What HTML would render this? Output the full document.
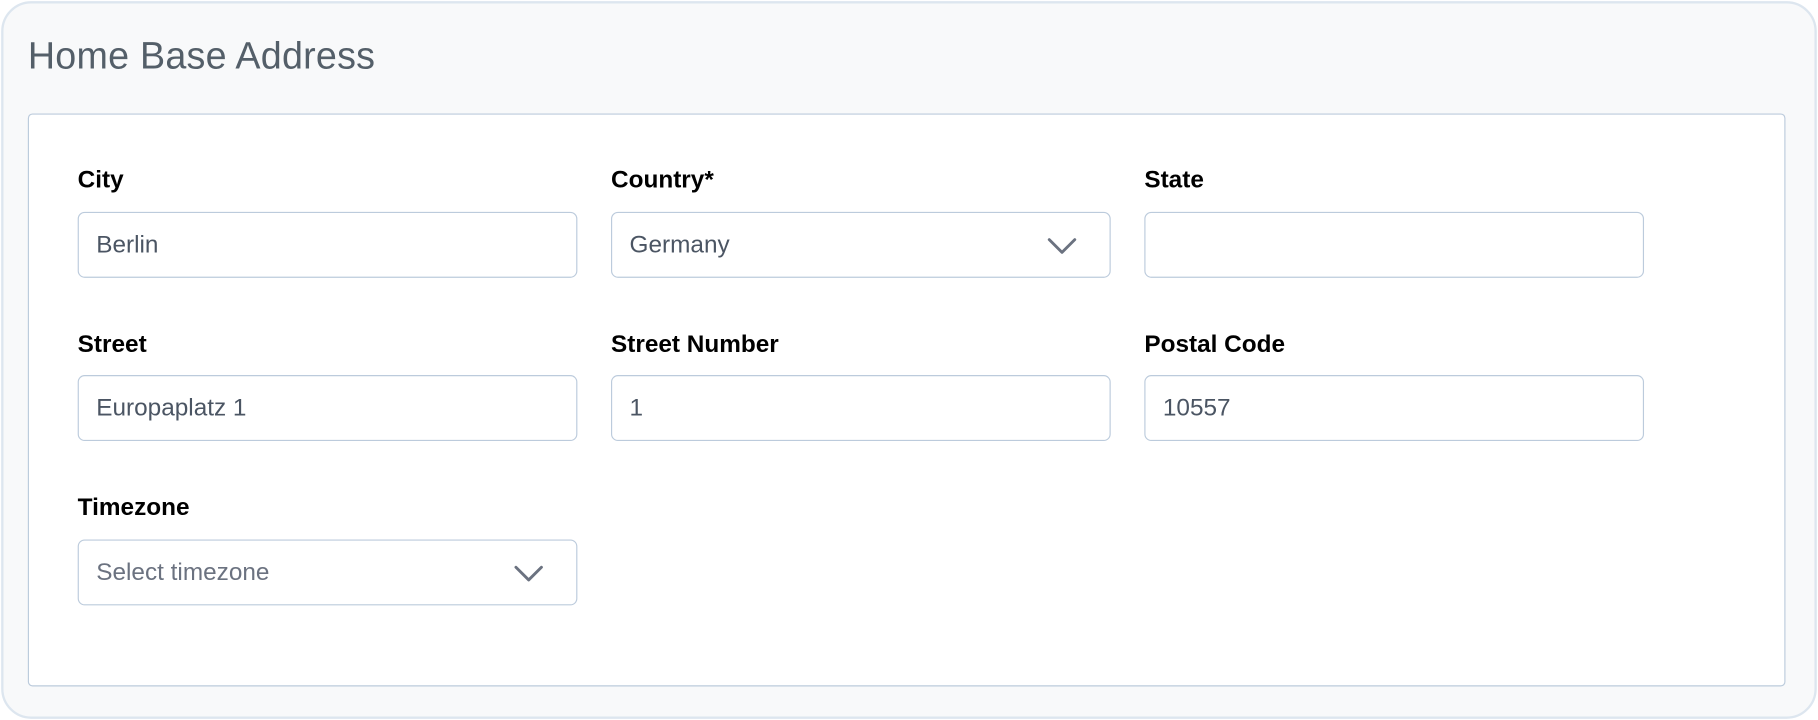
<!DOCTYPE html>
<html><head><style>
html,body{margin:0;padding:0;width:1818px;height:720px;overflow:hidden;background:#fff;font-family:"Liberation Sans",sans-serif}
#w{position:absolute;left:0;top:0;width:1568px;height:622px;transform:scale(1.1594,1.1576);transform-origin:0 0}
.card{position:absolute;left:1px;top:1px;width:1562px;height:616px;border:2px solid #dde6ef;border-radius:26px;background:#f8f9fa}
h1{position:absolute;left:24px;top:30px;margin:0;font-weight:normal;font-size:32.5px;color:#545f69;letter-spacing:.2px}
.inner{position:absolute;left:24px;top:98px;width:1514px;height:493px;border:1.5px solid #bccbdc;border-radius:4px;background:#fff}
.lbl{position:absolute;font-weight:bold;font-size:21px;color:#000}
.inp{position:absolute;border:1.5px solid #bccbdc;border-radius:6px;background:#fff;box-sizing:border-box}
.inp span{position:absolute;left:15px;top:16px;font-size:21px;color:#4b5563}
.inp svg{position:absolute;right:28px;top:19px}
</style></head><body><div id="w">
<div class="card"></div>
<h1>Home Base Address</h1>
<div class="inner"></div>
<div class="lbl" style="left:67px;top:144px">City</div>
<div class="lbl" style="left:527px;top:144px">Country*</div>
<div class="lbl" style="left:987px;top:144px">State</div>
<div class="inp" style="left:67px;top:183px;width:431px;height:57px"><span>Berlin</span></div>
<div class="inp" style="left:527px;top:183px;width:431px;height:57px"><span>Germany</span><svg width="26" height="18" viewBox="0 0 26 18"><path d="M2 4 L13 15 L24 4" fill="none" stroke="#6b7280" stroke-width="2.5" stroke-linecap="round" stroke-linejoin="round"/></svg></div>
<div class="inp" style="left:987px;top:183px;width:431px;height:57px"></div>
<div class="lbl" style="left:67px;top:286px">Street</div>
<div class="lbl" style="left:527px;top:286px">Street Number</div>
<div class="lbl" style="left:987px;top:286px">Postal Code</div>
<div class="inp" style="left:67px;top:324px;width:431px;height:57px"><span>Europaplatz 1</span></div>
<div class="inp" style="left:527px;top:324px;width:431px;height:57px"><span>1</span></div>
<div class="inp" style="left:987px;top:324px;width:431px;height:57px"><span>10557</span></div>
<div class="lbl" style="left:67px;top:427px">Timezone</div>
<div class="inp" style="left:67px;top:466px;width:431px;height:57px"><span style="color:#6b7280">Select timezone</span><svg width="26" height="18" viewBox="0 0 26 18"><path d="M2 4 L13 15 L24 4" fill="none" stroke="#6b7280" stroke-width="2.5" stroke-linecap="round" stroke-linejoin="round"/></svg></div>
</div></body></html>
